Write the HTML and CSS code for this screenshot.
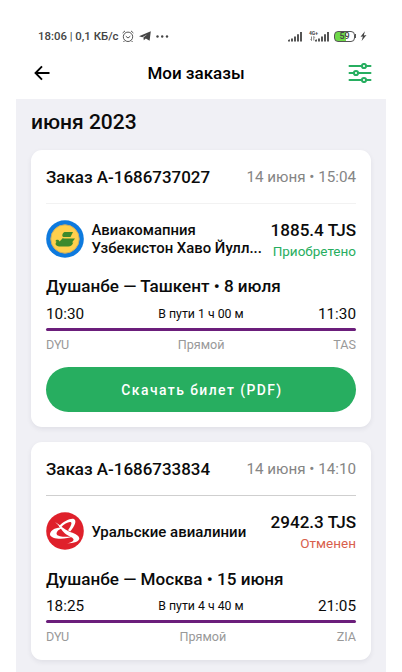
FILE: index.html
```html
<!DOCTYPE html>
<html lang="ru">
<head>
<meta charset="utf-8">
<title>Мои заказы</title>
<link rel="stylesheet" href="styles.css">
</head>
<body>
<main class="phone">
  <div class="status">
    <span class="clock">18:06 <i>|</i> 0,1 КБ/с</span>
    <svg class="alarm" width="12" height="13" viewBox="0 0 12 13" fill="none" stroke="#555" stroke-width="1"><circle cx="6" cy="6.8" r="4.7"/><path d="M.6 3 3 .9M11.4 3 9 .9M3.8 6.2 6 8l2.3-1.8M2.5 10.8l-1 1.2M9.500 10.800l1 1.200"/></svg>
    <svg class="plane" width="12" height="10" viewBox="0 0 12 10"><path d="M0 5.200 11.800.2 10.600 9.800 6.800 7.500 4.800 9.200 4.400 6.400 8.500 3.300 3.300 6.200Z" fill="#444"/></svg>
    <svg class="dots" width="13" height="3" viewBox="0 0 13 3" fill="#444"><circle cx="1.500" cy="1.500" r="1.200"/><circle cx="6.200" cy="1.500" r="1.200"/><circle cx="11" cy="1.500" r="1.200"/></svg>
    <span class="grow"></span>
    <svg class="signal" width="14" height="11" viewBox="0 0 14 11" fill="#555"><path d="M0 10.500V9l2-.7v2.200ZM3 7.600h2v2.900H3ZM6 5.500h2v5H6ZM9 3.200h2v7.300H9ZM12 1h2v9.500H12Z"/></svg>
    <span class="net"><b>4G+</b><svg width="6" height="5" viewBox="0 0 6 5" fill="none" stroke="#555" stroke-width=".7"><path d="M1.500.5v4M.5 3.400l1 1.100M3.800 4.500v-4M4.800 1.600l-1-1.100"/></svg></span>
    <svg class="signal2" width="14" height="11" viewBox="0 0 14 11" fill="#555"><path d="M0 10.500V9l2-.7v2.200ZM3 7.600h2v2.900H3ZM6 5.500h2v5H6ZM9 3.200h2v7.300H9ZM12 1h2v9.500H12Z"/></svg>
    <span class="battery">59</span><span class="nub"></span>
    <svg class="bolt" width="7" height="10" viewBox="0 0 7 10"><path d="M4.900.2.500 5.700 2.900 5.500 1.600 9.900 6.500 4 3.800 4.400Z" fill="#444"/></svg>
  </div>
  <header class="bar">
    <svg class="back" width="16" height="16" viewBox="0 0 16 16" fill="none" stroke="#000" stroke-width="1.900"><path d="M15.500 8H2M8 1.300 1.500 8 8 14.700"/></svg>
    <h1>Мои заказы</h1>
    <svg class="filter" width="24" height="20" viewBox="0 0 24 20" fill="#fff" stroke="#27ae60" stroke-width="2" stroke-linecap="round"><path d="M1.500 3h21M1.500 10h21M1.500 17h21"/><circle cx="16" cy="3" r="2.100"/><circle cx="8" cy="10" r="2.100"/><circle cx="16" cy="17" r="2.100"/></svg>
  </header>
  <section class="orders">
    <h2>июня 2023</h2>

    <article class="card">
      <div class="head"><span class="order">Заказ A-1686737027</span><span class="date">14 июня • 15:04</span></div>
      <div class="airline">
        <svg width="38" height="38" viewBox="0 0 38 38"><circle cx="19" cy="19" r="18.800" fill="#0e7ade"/><circle cx="19" cy="19" r="14.200" fill="#ffd04d" stroke="#c9ad62"/><path d="M18.500 12h8.500l-2.500 5h-7c-1.800 0-1.500-4 1-5ZM16.500 18.500h12.500l-3 4h-10ZM9.500 21.300c.3-2 3.800-2 3.800.3 1.500-.4 2.500-3.200 4-3.500l.2 4.300h9.800c-1 2.600-2.400 4-5 4h-9c-3.800 0-4.600-2.900-2.700-4.600Z" fill="#3d8a2c"/></svg>
        <p class="name two">Авиакомапния<br>Узбекистон Хаво Йулл...</p>
        <div class="sum"><strong>1885.4 TJS</strong><span class="ok">Приобретено</span></div>
      </div>
      <h3>Душанбе — Ташкент • 8 июля</h3>
      <div class="times"><span>10:30</span><small>В пути 1 ч 00 м</small><span>11:30</span></div>
      <div class="line"></div>
      <div class="codes"><span>DYU</span><span>Прямой</span><span>TAS</span></div>
      <button class="download" type="button">Скачать билет (PDF)</button>
    </article>

    <article class="card last">
      <div class="head dark"><span class="order">Заказ A-1686733834</span><span class="date">14 июня • 14:10</span></div>
      <div class="airline">
        <svg width="38" height="38" viewBox="0 0 38 38" fill="#fff"><circle cx="19" cy="19" r="18.800" fill="#df202b"/><path d="M13 14.500C17 9.500 24.500 6 27.800 7c3.400 1.600 1 7-3.600 12.500l-2.200-1.200c2.500-3.500 4.300-7 3-8-2-.9-6.500 1.200-10.500 5.700Z"/><path d="M9 10c5.500 3.200 9 7.500 14 9.500 4.500 1.800 10 3.500 10.300 6.800.3 3-5 5.200-12.800 5.200 4.500-1 7.500-2.500 7-4.300-.8-2.200-5-2.700-8.500-5.700-3.500-3-5.500-8-10-11.500Z"/><path d="M15 15.500C9.500 15 3.800 19 4 22.500c.6 5 15 5.500 23.500 1.800-7 1-15.500.8-16.800-2-.7-2 1.500-4.600 4.800-5.800Z"/></svg>
        <p class="name">Уральские авиалинии</p>
        <div class="sum"><strong>2942.3 TJS</strong><span class="cancel">Отменен</span></div>
      </div>
      <h3>Душанбе — Москва • 15 июня</h3>
      <div class="times"><span>18:25</span><small>В пути 4 ч 40 м</small><span>21:05</span></div>
      <div class="line"></div>
      <div class="codes"><span>DYU</span><span>Прямой</span><span>ZIA</span></div>
    </article>
  </section>
</main>
</body>
</html>
```

FILE: styles.css
```css
* { box-sizing: border-box; }
body { margin: 0; background: #fff; font-family: Roboto, sans-serif; color: #0b0b0b; overflow: hidden; }
h1, h2, h3, p { margin: 0; font-weight: 500; white-space: nowrap; }
svg { display: block; flex: none; }
.phone { width: 370px; height: 672px; margin: 0 auto; overflow: hidden; }

.status { height: 48px; padding: 24px 19px 0 22px; display: flex; align-items: center; color: #444; }
.clock { font-size: 11.4px; font-weight: 500; width: 84px; white-space: nowrap; }
.clock i { font-style: normal; font-weight: 400; }
.plane { margin-left: 5px; }
.dots { margin-left: 5px; }
.grow { flex: 1; }
.net { width: 11px; height: 12px; margin-left: 7px; }
.net b { display: block; font-size: 5px; line-height: 6px; }
.net svg { margin-left: 1px; }
.signal2 { margin-left: -5px; }
.battery { width: 21px; height: 11px; margin-left: 5px; border: 1.500px solid #555; border-radius: 4px; background: linear-gradient(90deg, #6fd94a 60%, #fff 60%); font-size: 9px; line-height: 9px; font-weight: 500; text-align: center; }
.nub { width: 1px; height: 4px; background: #555; }
.bolt { margin-left: 4px; }

.bar { height: 51px; padding: 0 14px 1px 18px; display: flex; align-items: center; justify-content: space-between; color: #000; }
.bar h1 { font-size: 17px; margin-left: -6px; }

.orders { background: #f0f0f5; height: 573px; padding: 0 15px; }
h2 { font-size: 21px; height: 51px; line-height: 46px; }
.card { background: #fff; border-radius: 11px; padding: 0 15px 15px; margin-bottom: 15px; box-shadow: 0 2px 5px rgba(40, 40, 70, .08); }
.card.last { padding-bottom: 11px; }
.head { height: 54px; display: flex; align-items: center; justify-content: space-between; border-bottom: 1px solid #f2f2f2; }
.head.dark { border-color: #cfcfcf; }
.order { font-size: 16.950px; font-weight: 500; }
.date { font-size: 15.200px; color: #858585; }
.airline { height: 69px; display: flex; align-items: center; }
.name { flex: 1; margin-left: 7.500px; padding-top: 2px; font-size: 15px; line-height: 18px; }
.name.two { padding-top: 1px; font-size: 14.900px; }
.sum { display: flex; flex-direction: column; align-items: flex-end; padding-top: 3px; }
.sum strong { font-size: 17.100px; line-height: 21px; font-weight: 500; }
.sum span { font-size: 13.500px; line-height: 20px; }
.ok { color: #27ae60; }
.cancel { color: #d8604c; }
h3 { font-size: 17.100px; height: 27px; line-height: 27px; }
.last h3 { line-height: 28px; }
.times { height: 28px; display: grid; grid-template-columns: 1fr auto 1fr; align-items: center; font-size: 15.300px; }
.times small { font-size: 12.300px; }
.times span:last-child { text-align: right; }
.line { height: 3px; background: #6b1e7b; border-radius: 2px; }
.codes { height: 26px; display: flex; justify-content: space-between; align-items: center; font-size: 12.600px; color: #999; }
.download { display: block; width: 100%; height: 45px; margin-top: 10px; padding: 0 0 0 2px; border: 0; border-radius: 23px; background: #27ae60; color: #fff; font: 500 13.900px Roboto, sans-serif; letter-spacing: 1.450px; }
```
